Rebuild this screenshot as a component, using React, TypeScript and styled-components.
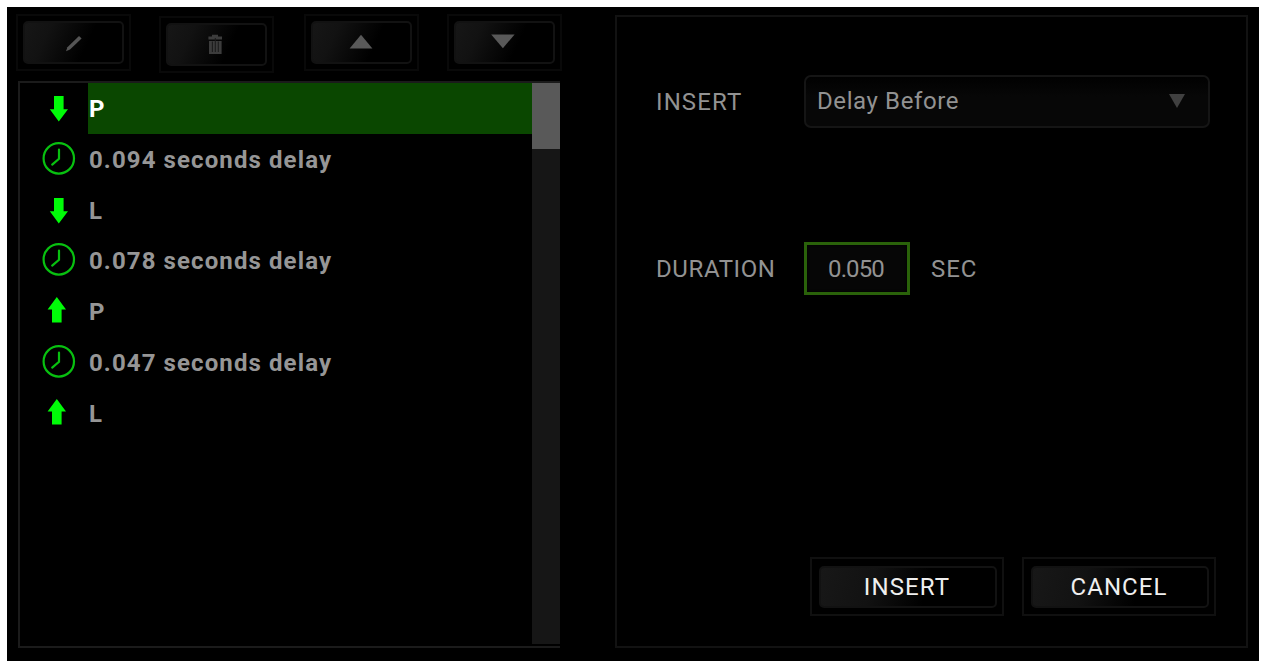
import * as React from 'react';
import styled, { createGlobalStyle } from 'styled-components';

type StepKind = 'down' | 'up' | 'delay';

interface Step {
  kind: StepKind;
  label: string;
}

const steps: Step[] = [
  { kind: 'down', label: 'P' },
  { kind: 'delay', label: '0.094 seconds delay' },
  { kind: 'down', label: 'L' },
  { kind: 'delay', label: '0.078 seconds delay' },
  { kind: 'up', label: 'P' },
  { kind: 'delay', label: '0.047 seconds delay' },
  { kind: 'up', label: 'L' },
];

const StepIcon = ({ kind }: { kind: StepKind }) => (
  <svg width="68" height="51" viewBox="0 0 68 51">
    {kind === 'down' && (
      <path d="M34 13h9.6v13.2H48L38.8 38.4 29.8 26.2H34z" fill="#00fb08" />
    )}
    {kind === 'up' && (
      <path d="M36.8 11L46 23.4h-4.4v13.2H32V23.4h-4.4z" fill="#00fb08" />
    )}
    {kind === 'delay' && (
      <g fill="none" stroke="#08c010" strokeWidth="2.2" strokeLinecap="round">
        <circle cx="38.8" cy="24.4" r="15.2" />
        <path d="M39 15.6v9.2l-6.8 5.8" />
      </g>
    )}
  </svg>
);

const PencilIcon = () => (
  <svg width="102" height="42" viewBox="0 0 102 42">
    <path d="M43 29.2l1.4-4L56 14l2.6 2.4L47 27.4z" fill="#555" />
  </svg>
);

const TrashIcon = () => (
  <svg width="102" height="42" viewBox="0 0 102 42">
    <path d="M46 10.8h6v1.6h4v3.2H42.4v-3.2H46z M43 17h12.6v13H43z" fill="#3c3c3c" />
    <path d="M46.4 17.5v10.5M49.3 14v14M52.3 17.5v10.5" stroke="#1c1c1c" strokeWidth="1.1" />
  </svg>
);

const UpIcon = () => (
  <svg width="102" height="42" viewBox="0 0 102 42">
    <path d="M50 12.8L61.4 26.4H38.6z" fill="#595959" />
  </svg>
);

const DownIcon = () => (
  <svg width="102" height="42" viewBox="0 0 102 42">
    <path d="M37.2 12.4h23.4L48.9 26.2z" fill="#595959" />
  </svg>
);

export default function App() {
  return (
    <React.Fragment>
      <GlobalStyle />
      <Screen>
        <LeftColumn>
          <Toolbar>
            <ToolFrame><ToolButton><PencilIcon /></ToolButton></ToolFrame>
            <ToolFrame $left={28} $top={2}><ToolButton><TrashIcon /></ToolButton></ToolFrame>
            <ToolFrame $left={30}><ToolButton><UpIcon /></ToolButton></ToolFrame>
            <ToolFrame $left={28}><ToolButton><DownIcon /></ToolButton></ToolFrame>
          </Toolbar>
          <ListBox>
            <Rows>
              {steps.map((step, i) => (
                <Row key={i}>
                  <StepIcon kind={step.kind} />
                  <RowText $selected={i === 0}>{step.label}</RowText>
                </Row>
              ))}
            </Rows>
            <ScrollTrack>
              <ScrollThumb />
            </ScrollTrack>
          </ListBox>
        </LeftColumn>
        <Panel>
          <Field>
            <Label $spacing={1.1}>INSERT</Label>
            <Select>
              <Text $spacing={0.6}>Delay Before</Text>
              <svg width="16" height="14" viewBox="0 0 16 14">
                <path d="M0 0h16L8 14z" fill="#404040" />
              </svg>
            </Select>
          </Field>
          <Field $top={114}>
            <Label $spacing={0.6}>DURATION</Label>
            <Duration><Text $spacing={-0.9}>0.050</Text></Duration>
            <Unit $spacing={0.9}>SEC</Unit>
          </Field>
          <Actions>
            <ActionFrame><ActionButton>INSERT</ActionButton></ActionFrame>
            <ActionFrame><ActionButton>CANCEL</ActionButton></ActionFrame>
          </Actions>
        </Panel>
      </Screen>
    </React.Fragment>
  );
}

const GlobalStyle = createGlobalStyle`
  * {
    box-sizing: border-box;
  }

  body {
    margin: 0;
    background: #fff;
    font-family: Roboto, "Liberation Sans", sans-serif;
    font-size: 24px;
    line-height: 28px;
  }

  svg {
    display: block;
    flex: none;
  }
`;

const Screen = styled.div`
  display: flex;
  width: 1252px;
  height: 654px;
  margin: 7px;
  padding: 7px 11px 13px 9px;
  background: #000;
`;

const LeftColumn = styled.div`
  width: 546px;
  margin-right: 53px;
  flex: none;
`;

const Toolbar = styled.div`
  display: flex;
  align-items: flex-start;
  height: 67px;
`;

const ToolFrame = styled.div<{ $left?: number; $top?: number }>`
  width: 115px;
  height: 57px;
  margin-left: ${p => p.$left || 0}px;
  margin-top: ${p => p.$top || 0}px;
  padding: 5px;
  border: 2px solid #090909;
  flex: none;
`;

const ToolButton = styled.button`
  display: flex;
  align-items: center;
  justify-content: center;
  width: 101px;
  height: 43px;
  padding: 0;
  border: 2px solid #121212;
  border-radius: 5px;
  background: linear-gradient(115deg, #171717 0%, #121212 25%, #000 62%) border-box;
`;

const ListBox = styled.div`
  display: flex;
  width: 542px;
  height: 567px;
  margin-left: 2px;
  border: 2px solid #1b1b1b;
  border-right: 0;
`;

const Rows = styled.div`
  flex: 1;
`;

const Row = styled.div`
  display: flex;
  height: 50.8px;
`;

const RowText = styled.div<{ $selected: boolean }>`
  flex: 1;
  padding: 12px 0 0 1px;
  color: ${p => (p.$selected ? '#fff' : '#969696')};
  background: ${p => (p.$selected ? '#0a4700' : 'transparent')};
  font-weight: bold;
  letter-spacing: 1.1px;
  white-space: nowrap;
`;

const ScrollTrack = styled.div`
  width: 28px;
  height: 561px;
  background: #161616;
`;

const ScrollThumb = styled.div`
  height: 66px;
  background: #595959;
`;

const Panel = styled.div`
  display: flex;
  flex-direction: column;
  width: 633px;
  height: 633px;
  margin-top: 1px;
  padding: 58px 30px 30px 39px;
  border: 2px solid #121212;
`;

const Field = styled.div<{ $top?: number }>`
  display: flex;
  align-items: center;
  height: 53px;
  margin-top: ${p => p.$top || 0}px;
`;

const Text = styled.span<{ $spacing: number }>`
  color: #929292;
  letter-spacing: ${p => p.$spacing}px;
  white-space: nowrap;
`;

const Label = styled(Text)`
  width: 148px;
  flex: none;
`;

const Unit = styled(Text)`
  margin-left: 21px;
`;

const Select = styled.div`
  display: flex;
  align-items: center;
  justify-content: space-between;
  width: 406px;
  height: 53px;
  padding: 0 23px 1px 11px;
  border: 2px solid #151515;
  border-radius: 7px;
  background: linear-gradient(#010101, #070707 40%);
`;

const Duration = styled.div`
  display: flex;
  align-items: center;
  justify-content: center;
  width: 106px;
  height: 53px;
  padding-right: 2px;
  border: 3px solid #2a620a;
  background: #060606;
  box-shadow: inset 0 0 3px #000;
`;

const Actions = styled.div`
  display: flex;
  gap: 18px;
  margin-top: auto;
  margin-left: 154px;
`;

const ActionFrame = styled.div`
  width: 194px;
  height: 59px;
  padding: 7px;
  border: 2px solid #101010;
  flex: none;
`;

const ActionButton = styled.button`
  width: 178px;
  height: 42px;
  padding: 0 2px 0 0;
  border: 2px solid #121212;
  border-radius: 5px;
  background: linear-gradient(105deg, #181818 0%, #121212 30%, #000 60%) border-box;
  color: #efefef;
  font: inherit;
  letter-spacing: 1.1px;
`;
